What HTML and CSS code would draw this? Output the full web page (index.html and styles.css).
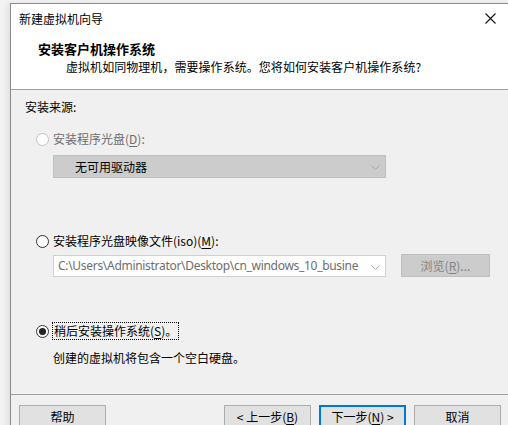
FILE: index.html
```html
<!DOCTYPE html>
<html lang="zh-CN">
<head>
<meta charset="utf-8">
<title>新建虚拟机向导</title>
<link rel="stylesheet" href="styles.css">
</head>
<body>
<div class="window">
  <div class="titlebar">
    <span class="title">新建虚拟机向导</span>
    <svg class="close" width="11" height="11" viewBox="0 0 11 11"><path d="M0.5 0.5 L10.5 10.5 M10.5 0.5 L0.5 10.5" stroke="#111" stroke-width="1.1" fill="none"/></svg>
  </div>
  <div class="header">
    <div class="h-title">安装客户机操作系统</div>
    <div class="h-sub">虚拟机如同物理机，需要操作系统。您将如何安装客户机操作系统?</div>
  </div>
  <div class="content">
    <div class="group-label">安装来源:</div>

    <div class="radio-row first disabled">
      <span class="radio"></span>
      <span class="label">安装程序光盘(<u>D</u>):</span>
    </div>
    <div class="select disabled-select">
      <span class="select-text">无可用驱动器</span>
      <svg class="chev" width="9" height="5" viewBox="0 0 9 5"><path d="M0.5 0.5 L4.5 4.5 L8.5 0.5" stroke="#a8a8a8" fill="none"/></svg>
    </div>

    <div class="radio-row second">
      <span class="radio"></span>
      <span class="label">安装程序光盘映像文件(iso)(<u>M</u>):</span>
    </div>
    <div class="iso-row">
      <div class="select iso-select">
        <span class="path-text">C:\Users\Administrator\Desktop\cn_windows_10_busine</span>
        <svg class="chev" width="9" height="5" viewBox="0 0 9 5"><path d="M0.5 0.5 L4.5 4.5 L8.5 0.5" stroke="#a8a8a8" fill="none"/></svg>
      </div>
      <div class="browse">浏览(<u>R</u>)...</div>
    </div>

    <div class="radio-row third">
      <span class="radio checked"></span>
      <span class="label focus">稍后安装操作系统(<u>S</u>)。</span>
    </div>
    <div class="desc">创建的虚拟机将包含一个空白硬盘。</div>
  </div>
  <div class="footer">
    <div class="btn help">帮助</div>
    <div class="spacer"></div>
    <div class="btn">&lt; 上一步(<u>B</u>)</div>
    <div class="btn default">下一步(<u>N</u>) &gt;</div>
    <div class="btn">取消</div>
  </div>
</div>
</body>
</html>
```

FILE: styles.css
```css
html, body {
  margin: 0;
  padding: 0;
}
body {
  background: #f3f3f3;
  width: 508px;
  height: 425px;
  overflow: hidden;
  font-family: "Noto Sans CJK SC", "Noto Sans", sans-serif;
  font-size: 12px;
  color: #000;
}
u {
  text-decoration: underline;
  text-underline-offset: 2px;
}
.window {
  margin: 3px 0 0 10px;
  width: 520px;
  height: 440px;
  border-top: 1px solid #8a8a8a;
  border-left: 1px solid #8a8a8a;
  background: #f0f0f0;
  box-shadow: -3px 0 6px rgba(0,0,0,0.08);
  display: flex;
  flex-direction: column;
}
.titlebar {
  height: 30px;
  background: #fff;
  display: flex;
  align-items: center;
  position: relative;
}
.title {
  margin-left: 8px;
  font-size: 12px;
  line-height: 30px;
}
.close {
  position: absolute;
  left: 474px;
  top: 9px;
}
.header {
  background: #fff;
  height: 56px;
  border-bottom: 1px solid #a0a0a0;
  padding-left: 27px;
  box-sizing: border-box;
}
.h-title {
  font-weight: bold;
  font-size: 13px;
  line-height: 16px;
  padding-top: 7px;
}
.h-sub {
  margin-left: 28px;
  line-height: 18px;
  margin-top: 1px;
  letter-spacing: 0.05px;
}
.content {
  height: 305px;
  padding: 9px 0 0 14px;
  box-sizing: border-box;
  border-bottom: 1px solid #a0a0a0;
}
.group-label {
  line-height: 16px;
}
.radio-row {
  display: flex;
  align-items: center;
  height: 16px;
  margin-left: 11px;
}
.radio-row.first { margin-top: 16px; }
.radio-row.second { margin-top: 55px; }
.radio-row.third { margin-top: 46px; }
.radio {
  width: 11px;
  height: 11px;
  border: 1px solid #333;
  border-radius: 50%;
  background: #fff;
  box-sizing: content-box;
  margin-right: 4px;
  position: relative;
}
.radio.checked::after {
  content: "";
  position: absolute;
  left: 2px;
  top: 2px;
  width: 7px;
  height: 7px;
  border-radius: 50%;
  background: #222;
}
.disabled .radio {
  border-color: #c4c4c4;
  background: #fdfdfd;
}
.disabled .label {
  color: #6d6d6d;
}
.label {
  line-height: 16px;
}
.label.focus {
  outline: 1px dotted #000;
  outline-offset: 0px;
  padding: 0 1px;
}
.select {
  margin-left: 28px;
  width: 333px;
  height: 23px;
  box-sizing: border-box;
  display: flex;
  align-items: center;
  position: relative;
}
.disabled-select {
  margin-top: 8px;
  background: #cccccc;
  border: 1px solid #bfbfbf;
}
.select-text {
  margin-left: 21px;
  line-height: 16px;
}
.chev {
  position: absolute;
  right: 5px;
  top: 9px;
}
.iso-row {
  display: flex;
  align-items: flex-start;
  margin-top: 5px;
}
.iso-select {
  background: #fff;
  border: 1px solid #d0d0d0;
  margin-top: 1px;
  height: 22px;
  overflow: hidden;
}
.path-text {
  margin-left: 4px;
  color: #6d6d6d;
  font-family: "Noto Sans", sans-serif;
  font-size: 12px;
  letter-spacing: -0.3px;
  white-space: nowrap;
  line-height: 16px;
}
.browse {
  margin-left: 15px;
  width: 89px;
  height: 23px;
  box-sizing: border-box;
  background: #cccccc;
  border: 1px solid #bfbfbf;
  color: #838383;
  display: flex;
  align-items: center;
  justify-content: center;
}
.desc {
  margin-left: 28px;
  margin-top: 11px;
  line-height: 16px;
}
.footer {
  display: flex;
  padding: 10px 0 0 8px;
}
.spacer {
  width: 118px;
}
.btn {
  width: 87px;
  height: 23px;
  box-sizing: border-box;
  background: #e1e1e1;
  border: 1px solid #adadad;
  display: flex;
  align-items: center;
  justify-content: center;
  margin-right: 8px;
  line-height: 16px;
}
.btn.help {
  margin-right: 0;
}
.btn.default {
  border: 2px solid #0078d7;
}
```
